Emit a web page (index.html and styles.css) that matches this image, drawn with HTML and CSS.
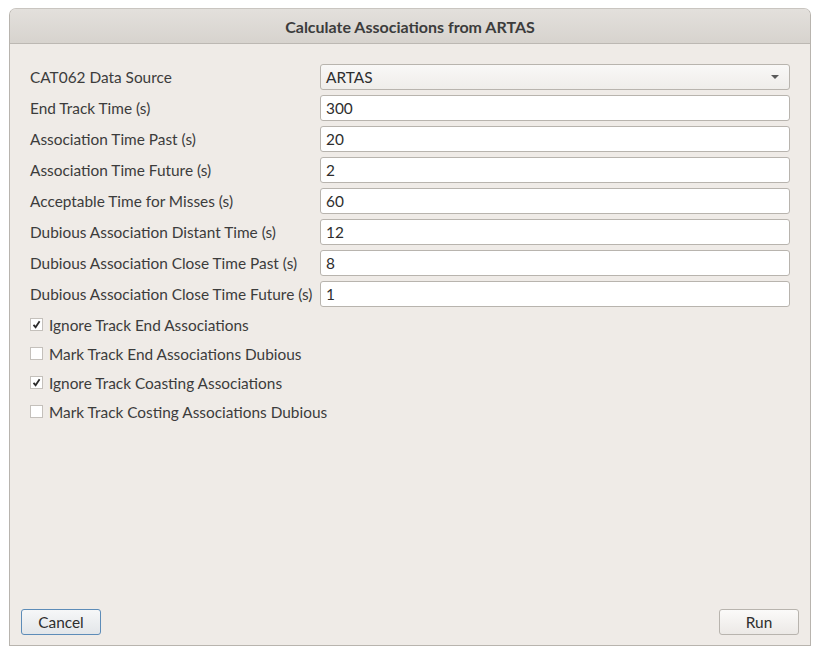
FILE: index.html
```html
<!DOCTYPE html>
<html>
<head>
<meta charset="utf-8">
<link rel="stylesheet" href="styles.css">
</head>
<body>
<div class="window">
  <div class="titlebar">Calculate Associations from ARTAS</div>
  <div class="content">
    <div class="form">
      <label class="lbl">CAT062 Data Source</label>
      <div class="combo"><span>ARTAS</span><span class="arrow"></span></div>
      <label class="lbl">End Track Time (s)</label>
      <div class="edit">300</div>
      <label class="lbl">Association Time Past (s)</label>
      <div class="edit">20</div>
      <label class="lbl">Association Time Future (s)</label>
      <div class="edit">2</div>
      <label class="lbl">Acceptable Time for Misses (s)</label>
      <div class="edit">60</div>
      <label class="lbl">Dubious Association Distant Time (s)</label>
      <div class="edit">12</div>
      <label class="lbl">Dubious Association Close Time Past (s)</label>
      <div class="edit">8</div>
      <label class="lbl">Dubious Association Close Time Future (s)</label>
      <div class="edit">1</div>
    </div>
    <div class="checks">
      <div class="check"><span class="box checked"><svg width="9" height="9" viewBox="0 0 9 9"><path d="M1.5 4.8 L3.6 7.2 L7.6 1.3" fill="none" stroke="#2b2b2b" stroke-width="1.8"/></svg></span>Ignore Track End Associations</div>
      <div class="check"><span class="box"></span>Mark Track End Associations Dubious</div>
      <div class="check"><span class="box checked"><svg width="9" height="9" viewBox="0 0 9 9"><path d="M1.5 4.8 L3.6 7.2 L7.6 1.3" fill="none" stroke="#2b2b2b" stroke-width="1.8"/></svg></span>Ignore Track Coasting Associations</div>
      <div class="check"><span class="box"></span>Mark Track Costing Associations Dubious</div>
    </div>
    <div class="spacer"></div>
    <div class="buttons">
      <button class="btn default">Cancel</button>
      <button class="btn">Run</button>
    </div>
  </div>
</div>
</body>
</html>
```
FILE: styles.css
```css
html, body {
  margin: 0;
  padding: 0;
  background: #ffffff;
}
body {
  width: 820px;
  height: 655px;
  font-family: Lato, "Open Sans", sans-serif;
  font-size: 15.4px;
  color: #3c3c3c;
}
.window {
  position: absolute;
  left: 9px;
  top: 8px;
  width: 800px;
  height: 636px;
  border: 1px solid #b8b4ae;
  border-top-color: #c9c5c0;
  border-radius: 7px 7px 0 0;
  background: #efebe7;
  display: flex;
  flex-direction: column;
  overflow: hidden;
}
.titlebar {
  height: 35px;
  flex: none;
  background: linear-gradient(#e3e0dc, #d7d3ce);
  border-bottom: 1px solid #bcb8b3;
  display: flex;
  align-items: center;
  justify-content: center;
  font-weight: bold;
  font-size: 16px;
  color: #3c3c3c;
  box-sizing: border-box;
  padding-top: 1px;
}
.content {
  flex: 1;
  display: flex;
  flex-direction: column;
  padding: 20px 11px 10px 11px;
}
.form {
  display: grid;
  grid-template-columns: 290px 470px;
  row-gap: 5px;
  padding: 0 9px;
}
.lbl {
  display: flex;
  align-items: center;
  height: 26px;
  white-space: nowrap;
}
.edit, .combo {
  height: 26px;
  box-sizing: border-box;
  border: 1px solid #b8b4ae;
  border-radius: 3px;
  background: #ffffff;
  display: flex;
  align-items: center;
  padding-left: 5px;
  color: #2e2e2e;
}
.combo {
  background: linear-gradient(#f9f8f7, #efedea);
  justify-content: space-between;
  padding-right: 10px;
}
.arrow {
  width: 0;
  height: 0;
  border-left: 4px solid transparent;
  border-right: 4px solid transparent;
  border-top: 4px solid #5a5a5a;
}
.checks {
  display: flex;
  flex-direction: column;
  padding-left: 9px;
  margin-top: 3px;
}
.check {
  display: flex;
  align-items: center;
  height: 29px;
  white-space: nowrap;
}
.box {
  width: 13px;
  height: 13px;
  box-sizing: border-box;
  border: 1px solid #c4c0bb;
  background: #ffffff;
  margin-right: 6px;
  display: flex;
  align-items: center;
  justify-content: center;
}
.spacer {
  flex: 1;
}
.buttons {
  display: flex;
  justify-content: space-between;
}
.btn {
  width: 80px;
  height: 26px;
  box-sizing: border-box;
  border: 1px solid #b8b4ae;
  border-radius: 3px;
  background: linear-gradient(#fbfaf9, #ece9e6);
  font-family: inherit;
  font-size: 15.4px;
  color: #2e2e2e;
  padding: 0;
}
.btn.default {
  border-color: #5d8cb8;
  background: linear-gradient(#f6f7f8, #e3e6e9);
}
```
